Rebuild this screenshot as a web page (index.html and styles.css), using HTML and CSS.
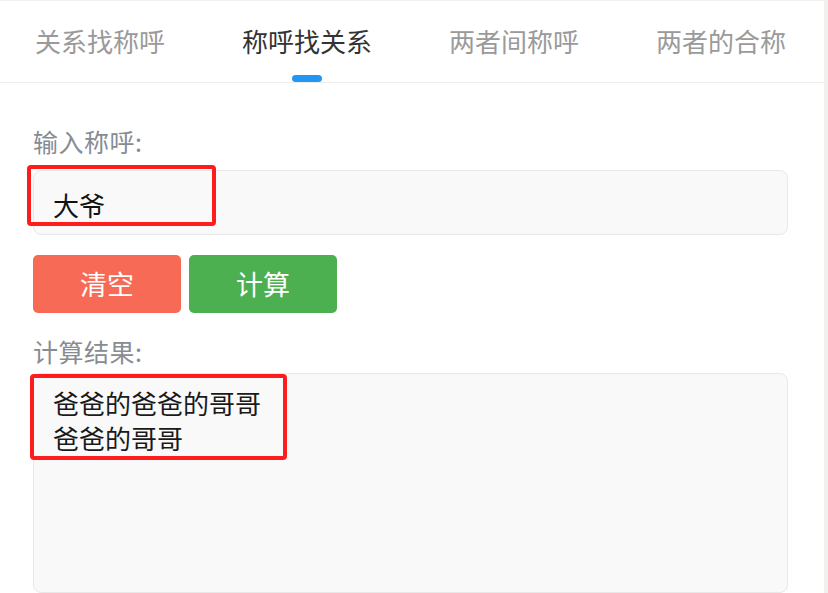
FILE: index.html
```html
<!DOCTYPE html>
<html lang="zh-CN">
<head>
<meta charset="utf-8">
<title>称呼找关系</title>
<link rel="stylesheet" href="styles.css">
</head>
<body>
<div class="app">
  <nav class="tabs">
    <div class="tab">关系找称呼</div>
    <div class="tab active">称呼找关系<span class="indicator"></span></div>
    <div class="tab">两者间称呼</div>
    <div class="tab">两者的合称</div>
  </nav>
  <main class="main">
    <div class="label label-first">输入称呼:</div>
    <div class="field field-input">
      <div class="input">大爷</div>
      <div class="mark mark-input"></div>
    </div>
    <div class="actions">
      <button class="btn btn-clear">清空</button>
      <button class="btn btn-calc">计算</button>
    </div>
    <div class="label label-result">计算结果:</div>
    <div class="field field-result">
      <div class="result">爸爸的爸爸的哥哥<br>爸爸的哥哥</div>
      <div class="mark mark-result"></div>
    </div>
  </main>
</div>
</body>
</html>
```
FILE: styles.css
```css
* { box-sizing: border-box; }
html, body {
  margin: 0;
  padding: 0;
  background: #f1f0ee;
  font-family: "Noto Sans CJK SC", "Noto Sans", sans-serif;
}
.app {
  margin-right: 4px;
  background: #ffffff;
  height: 593px;
  overflow: hidden;
}
.tabs {
  display: flex;
  align-items: flex-start;
  gap: 77px;
  height: 83px;
  padding-left: 35px;
  border-top: 1px solid #f2f2f2;
  border-bottom: 1px solid #ededed;
}
.tab {
  display: flex;
  flex-direction: column;
  align-items: center;
  font-size: 26px;
  line-height: 36px;
  padding-top: 22px;
  color: #9a9a9a;
  white-space: nowrap;
}
.tab.active { color: #333333; }
.indicator {
  display: block;
  width: 30px;
  height: 7px;
  margin-top: 16px;
  border-radius: 4px;
  background: #2196f3;
}
.main {
  padding: 0 36px 0 33px;
}
.label {
  font-size: 25px;
  line-height: 34px;
  color: #878c94;
  letter-spacing: 0.5px;
}
.label-first { margin-top: 41px; }
.field { position: relative; }
.field-input { margin-top: 12px; }
.input {
  height: 65px;
  padding: 17px 19px 0;
  font-size: 26px;
  line-height: 34px;
  color: #111111;
  background: #f9f9f9;
  border: 1px solid #e8e8e8;
  border-radius: 8px;
}
.actions {
  display: flex;
  gap: 8px;
  margin-top: 20px;
}
.btn {
  width: 148px;
  height: 58px;
  border: none;
  border-radius: 5px;
  color: #ffffff;
  font-family: "Noto Sans CJK SC", "Noto Sans", sans-serif;
  font-size: 27px;
  line-height: 58px;
  padding: 0;
}
.btn-clear { background: #f76a56; }
.btn-calc { background: #4caf50; }
.label-result { margin-top: 21px; }
.field-result { margin-top: 5px; }
.result {
  height: 220px;
  padding: 11px 19px;
  font-size: 26px;
  line-height: 35px;
  color: #1a1a1a;
  background: #f9f9f9;
  border: 1px solid #e8e8e8;
  border-radius: 8px;
}
.mark {
  position: absolute;
  border: 4px solid #ff1c1c;
  border-radius: 4px;
}
.mark-input {
  left: -6px;
  top: -5px;
  width: 189px;
  height: 61px;
}
.mark-result {
  left: -3px;
  top: 1px;
  width: 257px;
  height: 86px;
}
```
